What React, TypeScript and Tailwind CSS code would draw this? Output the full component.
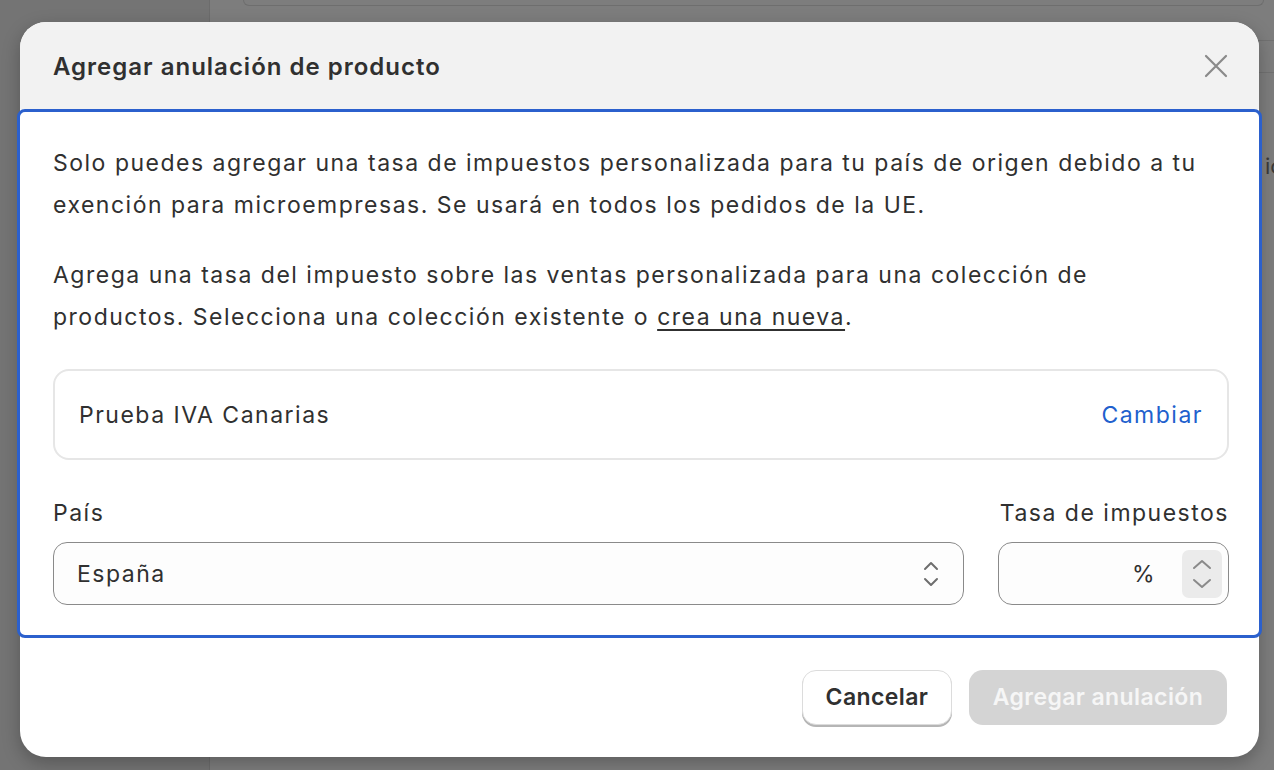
import React from "react";

function UpDown({ className = "" }: { className?: string }) {
  return (
    <svg className={className} viewBox="0 0 16 28" fill="none" stroke="currentColor" strokeWidth="2" strokeLinecap="round" strokeLinejoin="round">
      <path d="M2 9 L8 3 L14 9" />
      <path d="M2 19 L8 25 L14 19" />
    </svg>
  );
}

export default function App() {
  return (
    <div
      className="relative w-[1274px] h-[770px] overflow-hidden bg-[#7d7d7d]"
      style={{ fontFamily: "Inter, 'Noto Sans', sans-serif" }}
    >
      {/* backdrop */}
      <div className="absolute inset-0 flex">
        <div className="w-[210px] h-full bg-[#747474] border-r border-[#6c6c6c]" />
        <div className="flex-1 relative">
          <div className="ml-[33px] mr-[10px] h-[6px] rounded-b-[10px] border border-t-0 border-[#6e6e6e]" />
          <div className="absolute right-0 top-[40px] w-[20px] border-t border-[#717171]" />
          <div className="absolute right-0 top-[72px] w-[20px] border-t border-[#717171]" />
          <div className="absolute left-[1055px] top-[150px] text-[22px] text-[#3a3a3a]">ic</div>
        </div>
      </div>

      {/* modal */}
      <div className="absolute left-[20px] top-[22px] w-[1239px] h-[735px] rounded-[26px] bg-white flex flex-col shadow-[0_6px_18px_rgba(0,0,0,0.25)]">
        <div className="h-[87px] shrink-0 bg-[#f2f2f2] rounded-t-[26px] flex items-center justify-between pl-[33px] pr-[31px]">
          <h1 className="text-[24px] font-semibold text-[#303030] tracking-[1px] pt-[2px]">Agregar anulación de producto</h1>
          <svg className="w-[24px] h-[24px] text-[#8a8a8a]" viewBox="0 0 24 24" fill="none" stroke="currentColor" strokeWidth="2.2" strokeLinecap="round">
            <path d="M2 2 L22 22 M22 2 L2 22" />
          </svg>
        </div>

        <div className="-mx-[3px] border-[3px] border-[#2b60cd] rounded-[8px] bg-white pt-[30px] pb-[30px] pl-[33px] pr-[34px] text-[23px] tracking-[1.5px] leading-[42px] text-[#303030]">
          <p>
            Solo puedes agregar una tasa de impuestos personalizada para tu país de origen debido a tu exención para microempresas. Se usará en todos los pedidos de la UE.
          </p>
          <p className="mt-[28px]">
            Agrega una tasa del impuesto sobre las ventas personalizada para una colección de productos. Selecciona una colección existente o{" "}
            <span className="underline underline-offset-[4px] decoration-[1.5px]">crea una nueva</span>.
          </p>

          <div className="mt-[31px] -mr-[4px] h-[91px] rounded-[16px] border-2 border-[#e6e6e6] flex items-center justify-between pl-[24px] pr-[24px]">
            <span>Prueba IVA Canarias</span>
            <span className="text-[#2160cd]">Cambiar</span>
          </div>

          <div className="mt-[32px] -mr-[4px] flex gap-[34px]">
            <div className="flex-1">
              <div className="leading-[42px] mb-[8px]">País</div>
              <div className="h-[63px] rounded-[14px] border-[1.5px] border-[#8a8a8a] bg-[#fdfdfd] flex items-center justify-between pl-[23px] pr-[24px]">
                <span>España</span>
                <UpDown className="w-[16px] h-[28px] text-[#6e6e6e]" />
              </div>
            </div>
            <div className="w-[231px]">
              <div className="leading-[42px] mb-[8px] text-right">Tasa de impuestos</div>
              <div className="h-[63px] rounded-[14px] border-[1.5px] border-[#8a8a8a] bg-[#fdfdfd] flex items-center justify-end pr-[6px]">
                <span className="mr-[26px]">%</span>
                <div className="w-[40px] h-[48px] rounded-[7px] bg-[#ebebeb] flex flex-col items-center justify-center gap-[8px] text-[#8a8a8a]">
                  <svg className="w-[20px] h-[11px]" viewBox="0 0 20 11" fill="none" stroke="currentColor" strokeWidth="2" strokeLinecap="round" strokeLinejoin="round"><path d="M2 9 L10 2 L18 9" /></svg>
                  <svg className="w-[20px] h-[11px]" viewBox="0 0 20 11" fill="none" stroke="currentColor" strokeWidth="2" strokeLinecap="round" strokeLinejoin="round"><path d="M2 2 L10 9 L18 2" /></svg>
                </div>
              </div>
            </div>
          </div>
        </div>

        <div className="flex-1 flex items-center justify-end gap-[17px] pr-[32px]">
          <button className="h-[55px] w-[150px] rounded-[14px] bg-white border border-[#dcdcdc] shadow-[0_2px_0_#b5b5b5] text-[23px] tracking-[0.4px] font-semibold text-[#303030]">
            Cancelar
          </button>
          <button className="h-[55px] w-[258px] rounded-[14px] bg-[#d4d4d4] text-[23px] tracking-[0.4px] font-semibold text-[#f6f6f6]">
            Agregar anulación
          </button>
        </div>
      </div>
    </div>
  );
}
